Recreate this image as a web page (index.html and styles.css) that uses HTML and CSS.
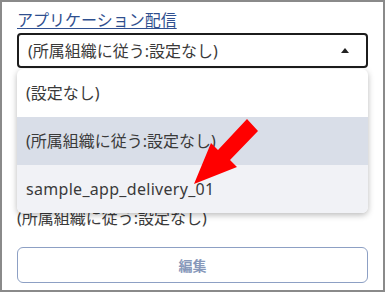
FILE: index.html
```html
<!DOCTYPE html>
<html lang="ja">
<head>
<meta charset="utf-8">
<link rel="stylesheet" href="styles.css">
</head>
<body>
<div class="frame">
  <div class="label">アプリケーション配信</div>
  <div class="select-wrap">
    <div class="select">
      <span class="value">(所属組織に従う:設定なし)</span>
      <span class="caret"></span>
    </div>
    <ul class="menu">
      <li class="item">(設定なし)</li>
      <li class="item selected">(所属組織に従う:設定なし)</li>
      <li class="item hover latin">sample_app_delivery_01</li>
    </ul>
  </div>
  <div class="effective">(所属組織に従う:設定なし)</div>
  <button class="edit">編集</button>
  <svg class="arrow" width="385" height="292" viewBox="0 0 385 292">
    <polygon points="247,119 258,131 230,160 237,167 194,184 211,143 218,150" fill="#ff0000"/>
  </svg>
</div>
</body>
</html>
```
FILE: styles.css
```css
* { box-sizing: border-box; }
html, body { margin: 0; padding: 0; background: #fff; }
body {
  font-family: "Noto Sans", "Noto Sans CJK JP", sans-serif;
  font-size: 16px;
  color: #3a3a3a;
}
.frame {
  position: relative;
  width: 385px;
  height: 292px;
  border: 2px solid #8a8a8a;
  padding: 6px 15px 0 15px;
  overflow: hidden;
}
.label {
  line-height: 24px;
  color: #2f4f8f;
  text-decoration: underline;
  text-underline-offset: 2px;
}
.select-wrap {
  position: relative;
  margin-top: 1px;
}
.select {
  height: 35px;
  border: 2px solid #1c1c1c;
  border-radius: 4px;
  display: flex;
  align-items: center;
  justify-content: space-between;
  padding: 0 17px 0 9px;
  line-height: 24px;
}
.caret {
  width: 0;
  height: 0;
  border-left: 4.5px solid transparent;
  border-right: 4.5px solid transparent;
  border-bottom: 5px solid #222;
}
.menu {
  position: absolute;
  left: 0;
  right: 0;
  top: 36px;
  margin: 0;
  padding: 0;
  list-style: none;
  background: #fff;
  border-radius: 6px;
  overflow: hidden;
  box-shadow: 0 2px 6px rgba(0, 0, 0, 0.28);
  z-index: 2;
}
.item {
  height: 48px;
  display: flex;
  align-items: center;
  padding-left: 9px;
  line-height: 24px;
}
.item.latin { letter-spacing: 0.3px; }
.item.selected { background: #d9dee8; }
.item.hover { background: #f1f2f6; }
.effective {
  margin-top: 138px;
  line-height: 24px;
}
.edit {
  display: block;
  width: 100%;
  height: 36px;
  margin-top: 17px;
  background: #fff;
  border: 1px solid #8da0c4;
  border-radius: 6px;
  color: #8798ba;
  font-family: "Noto Sans CJK JP", sans-serif;
  font-size: 14px;
  font-weight: bold;
}
.arrow {
  position: absolute;
  left: -2px;
  top: -2px;
  z-index: 3;
  pointer-events: none;
}
```
